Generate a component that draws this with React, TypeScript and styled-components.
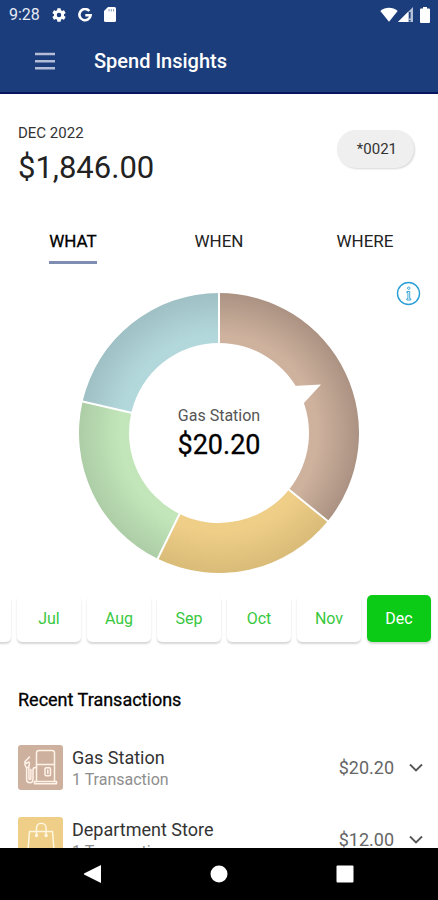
import React, { useState } from "react";
import styled, { createGlobalStyle } from "styled-components";

const GlobalStyle = createGlobalStyle`
  *, *::before, *::after { box-sizing: border-box; }
  body { margin: 0; background: #fff; }
  button { font: inherit; color: inherit; border: 0; padding: 0; background: none; cursor: pointer; }
  svg { display: block; flex: none; }
`;

const Screen = styled.div`
  display: flex;
  flex-direction: column;
  height: 100vh;
  overflow: hidden;
  background: #fff;
  color: #111;
  font-family: Roboto, "Noto Sans", sans-serif;
`;

const Header = styled.header`
  flex: none;
  background: #1c3d7b;
  color: #fff;
  border-bottom: 2px solid #08155f;
`;

const StatusBar = styled.div`
  display: flex;
  align-items: center;
  justify-content: space-between;
  height: 29px;
  padding: 0 8px 0 9px;
`;

const StatusGroup = styled.div<{ $gap: number }>`
  display: flex;
  align-items: center;
  gap: ${(p) => p.$gap}px;
`;

const Clock = styled.time`
  font-size: 16px;
  line-height: 20px;
  color: #e6ebf5;
`;

const TitleBar = styled.div`
  display: flex;
  align-items: center;
  gap: 38px;
  height: 63px;
  padding: 0 34px;
`;

const MenuButton = styled.button`
  color: #b4bdd8;
`;

const Title = styled.h1`
  margin: 0;
  font-size: 20px;
  font-weight: 500;
  line-height: 24px;
`;

const Content = styled.main`
  flex: 1;
  min-height: 0;
  overflow: hidden;
`;

const Summary = styled.section`
  display: flex;
  justify-content: space-between;
  align-items: center;
  padding: 28px 24px 0 18px;
`;

const Period = styled.p`
  margin: 0;
  font-size: 15px;
  line-height: 22px;
  color: #333;
`;

const Total = styled.p`
  margin: 0;
  font-size: 31px;
  line-height: 48px;
  color: #222;
`;

const CardPill = styled.button`
  height: 38px;
  padding: 0 17px 0 20px;
  margin-bottom: 16px;
  border-radius: 19px;
  background: #efefef;
  box-shadow: 1px 1px 2px rgba(0, 0, 0, 0.16);
  font-size: 15px;
  color: #333;
`;

const Tabs = styled.nav`
  display: grid;
  grid-template-columns: repeat(3, 1fr);
  justify-items: center;
  padding-top: 36px;
`;

const Tab = styled.button<{ $active: boolean }>`
  height: 36px;
  border-bottom: 3px solid ${(p) => (p.$active ? "#7f8db3" : "transparent")};
  padding-bottom: 7px;
  font-size: 17px;
  line-height: 26px;
  color: ${(p) => (p.$active ? "#000" : "#222")};
  -webkit-text-stroke: ${(p) => (p.$active ? "0.3px #000" : "0")};
`;

const ChartArea = styled.section`
  display: grid;
  padding: 17px 17px 0;

  > * {
    grid-area: 1 / 1;
  }
`;

const ChartFrame = styled.div`
  justify-self: center;
  margin-top: 12px;
`;

const ChartCaption = styled.div`
  place-self: center;
  padding-top: 12px;
  text-align: center;
`;

const ChartLabel = styled.div`
  font-size: 16px;
  line-height: 24px;
  color: #555;
`;

const ChartValue = styled.div`
  font-size: 27px;
  line-height: 34px;
  color: #000;
  -webkit-text-stroke: 0.3px #000;
`;

const InfoButton = styled.button`
  place-self: start end;
  color: #2b9fd6;
`;

const Months = styled.div`
  display: flex;
  justify-content: flex-end;
  gap: 6px;
  padding: 22px 7px 6px;
  overflow: hidden;
`;

const Month = styled.button<{ $active: boolean }>`
  flex: none;
  width: 64px;
  height: 47px;
  border-radius: 5px;
  background: ${(p) => (p.$active ? "#0bcb16" : "#fff")};
  color: ${(p) => (p.$active ? "#fff" : "#38c840")};
  box-shadow: 0 2px 2px rgba(0, 0, 0, 0.16);
  font-size: 16px;
`;

const SectionTitle = styled.h2`
  margin: 0;
  padding: 40px 18px 33px;
  font-size: 18px;
  font-weight: 400;
  line-height: 24px;
  color: #000;
  -webkit-text-stroke: 0.3px #000;
`;

const Transactions = styled.ul`
  display: flex;
  flex-direction: column;
  gap: 27px;
  margin: 0;
  padding: 0 15px 27px 18px;
  list-style: none;
`;

const Row = styled.li`
  display: flex;
  align-items: center;
  height: 45px;
`;

const CategoryTile = styled.div<{ $color: string }>`
  width: 45px;
  height: 45px;
  border-radius: 3px;
  background: ${(p) => p.$color};
`;

const RowText = styled.div`
  flex: 1;
  padding-left: 9px;
`;

const RowName = styled.div`
  font-size: 18px;
  line-height: 24px;
  color: #333;
`;

const RowCount = styled.div`
  font-size: 16px;
  line-height: 20px;
  color: #8e8e8e;
`;

const RowAmount = styled.div`
  font-size: 18px;
  line-height: 24px;
  color: #666;
`;

const ExpandButton = styled.button`
  padding-left: 15px;
  color: #555;
`;

const SystemNav = styled.nav`
  flex: none;
  display: flex;
  justify-content: center;
  align-items: center;
  gap: 106px;
  height: 52px;
  background: #000;
  color: #fff;
`;

const GearIcon = () => (
  <svg width="14" height="14" viewBox="2 2 20 20" fill="currentColor">
    <path d="M19.14 12.94c.04-.3.06-.61.06-.94s-.02-.64-.07-.94l2.03-1.58a.49.49 0 0 0 .12-.61l-1.92-3.32a.49.49 0 0 0-.59-.22l-2.39.96a7 7 0 0 0-1.62-.94l-.36-2.54A.48.48 0 0 0 13.92 2.4h-3.84a.48.48 0 0 0-.47.41l-.36 2.54a7.3 7.3 0 0 0-1.62.94l-2.39-.96a.48.48 0 0 0-.59.22L2.74 8.87a.47.47 0 0 0 .12.61l2.03 1.58c-.05.3-.09.63-.09.94s.02.64.07.94l-2.03 1.58a.49.49 0 0 0-.12.61l1.92 3.32c.12.22.37.29.59.22l2.39-.96c.5.38 1.03.7 1.62.94l.36 2.54c.05.24.24.41.48.41h3.84c.24 0 .44-.17.47-.41l.36-2.54a7 7 0 0 0 1.62-.94l2.39.96c.22.08.47 0 .59-.22l1.92-3.32a.47.47 0 0 0-.12-.61zM12 15.2a3.2 3.2 0 1 1 0-6.4 3.2 3.2 0 0 1 0 6.4z" />
  </svg>
);

const GoogleIcon = () => (
  <svg width="14" height="14" viewBox="0 0 14 14" fill="none" stroke="currentColor" strokeWidth="2.6">
    <path d="M11.3 3A5.6 5.6 0 1 0 12.6 7.3H7.3" />
  </svg>
);

const SdCardIcon = () => (
  <svg width="12" height="15" viewBox="0 0 12 15">
    <path d="M4 0h6.500A1.500 1.500 0 0 1 12 1.500v12a1.500 1.500 0 0 1-1.500 1.500h-9A1.500 1.500 0 0 1 0 13.500V4z" fill="#fff" />
    <path d="M5 2v2.500M7.300 2v2.500M9.600 2v2.500" stroke="#8b9bbf" strokeWidth="1" />
  </svg>
);

const WifiIcon = () => (
  <svg width="18" height="15" viewBox="0 0 18 15" fill="#fff">
    <path d="M.3 4C5.400-.4 12.600-.4 17.700 4L9 14.800z" />
  </svg>
);

const SignalIcon = () => (
  <svg width="15" height="15" viewBox="0 0 15 15">
    <path d="M15 0v15H0z" fill="#b4bfd8" />
    <path d="M10 5v10H0z" fill="#fff" />
    <path d="M11.800 5v6.500M11.800 13v1.500" stroke="#1c3d7b" strokeWidth="1.500" />
  </svg>
);

const BatteryIcon = () => (
  <svg width="10" height="16" viewBox="0 0 10 16" fill="#fff">
    <path d="M3 0h4v1.500h2a1 1 0 0 1 1 1V15a1 1 0 0 1-1 1H1a1 1 0 0 1-1-1V2.500a1 1 0 0 1 1-1h2z" />
  </svg>
);

const MenuIcon = () => (
  <svg width="22" height="18" viewBox="0 0 22 18" stroke="currentColor" strokeWidth="2.400">
    <path d="M1 2h20M1 9.200h20M1 16.200h20" />
  </svg>
);

const InfoIcon = () => (
  <svg width="25" height="25" viewBox="0 0 25 25" fill="none" stroke="currentColor">
    <circle cx="12.500" cy="12.500" r="11" strokeWidth="1.400" />
    <circle cx="12.700" cy="7.200" r="1.200" strokeWidth="0.900" />
    <path d="M10.800 10.500h2.900v7.300h1.100v1.200h-4v-1.200h1.100v-6.100h-1.100z" strokeWidth="0.900" />
  </svg>
);

const ChevronIcon = () => (
  <svg width="14" height="10" viewBox="0 0 14 10" fill="none" stroke="currentColor" strokeWidth="1.800">
    <path d="M1 1.500l6 6 6-6" />
  </svg>
);

const GasIcon = () => (
  <svg width="45" height="45" viewBox="0 0 45 45" fill="none" stroke="#fff3ea" strokeWidth="1.500" strokeLinejoin="round" strokeLinecap="round">
    <path d="M18.500 36.500V8a2.500 2.500 0 0 1 2.500-2.500h13A2.500 2.500 0 0 1 36.500 8v28.500" />
    <path d="M18.500 19.500h18M16.500 36.500h22v2.200h-22z" />
    <rect x="27" y="22.800" width="5.500" height="8" rx="1.200" />
    <path d="M29.800 25v3.500" />
    <path d="M18.500 22.500h-1a2.500 2.500 0 0 0-2.500 2.500v9.500a3.200 3.200 0 0 1-6.400 0V23L7 20v-3.500l4.500-4.500M7.500 18.500l3.500-1.500M8.600 22.500h2.200l.7-4.500M10.900 23v10.500a1 1 0 0 0 2 0V24.500" />
  </svg>
);

const BagIcon = () => (
  <svg width="45" height="45" viewBox="0 0 45 45" fill="none" stroke="#fff6df" strokeWidth="1.500" strokeLinejoin="round" strokeLinecap="round">
    <path d="M11.500 14.500h23l2 24.500h-27z" />
    <path d="M18.500 18v-7a4.800 4.800 0 0 1 9.600 0v7" />
    <circle cx="18.500" cy="18.500" r="1" />
    <circle cx="28.100" cy="18.500" r="1" />
  </svg>
);

const BackIcon = () => (
  <svg width="20" height="20" viewBox="0 0 20 20" fill="currentColor">
    <path d="M18 1v18L1 10.500v-1z" />
  </svg>
);

const HomeIcon = () => (
  <svg width="20" height="20" viewBox="0 0 20 20" fill="currentColor">
    <circle cx="10" cy="10" r="8.500" />
  </svg>
);

const RecentsIcon = () => (
  <svg width="20" height="20" viewBox="0 0 20 20" fill="currentColor">
    <rect x="1.500" y="1.500" width="17" height="17" rx="1" />
  </svg>
);

const OUTER = 140;
const INNER = 90;

const slices = [
  { id: "gas", from: 0, to: 129, inner: "#ceb29e", outer: "#ab9282" },
  { id: "store", from: 129, to: 206, inner: "#efce88", outer: "#d9bc78" },
  { id: "green", from: 206, to: 283, inner: "#c2e6ba", outer: "#adcda6" },
  { id: "blue", from: 283, to: 360, inner: "#b3d8dc", outer: "#9fc0c4" },
];

const polar = (radius: number, degrees: number) => {
  const a = (degrees * Math.PI) / 180;
  return `${radius * Math.sin(a)} ${-radius * Math.cos(a)}`;
};

const ringPath = (from: number, to: number) =>
  `M${polar(OUTER, from)}A${OUTER} ${OUTER} 0 0 1 ${polar(OUTER, to)}` +
  `L${polar(INNER, to)}A${INNER} ${INNER} 0 0 0 ${polar(INNER, from)}Z`;

const Donut = () => (
  <svg width="280" height="280" viewBox="-140 -140 280 280" role="img">
    <defs>
      {slices.map((s) => (
        <radialGradient key={s.id} id={s.id} gradientUnits="userSpaceOnUse" cx="0" cy="0" r={OUTER}>
          <stop offset="0.7" stopColor={s.inner} />
          <stop offset="1" stopColor={s.outer} />
        </radialGradient>
      ))}
    </defs>
    {slices.map((s) => (
      <path key={s.id} d={ringPath(s.from, s.to)} fill={`url(#${s.id})`} />
    ))}
    {slices.map((s) => (
      <path key={s.id} d={`M${polar(INNER - 1, s.from)}L${polar(OUTER + 1, s.from)}`} stroke="#fff" strokeWidth="2" />
    ))}
    <path d="M74-47L102-48.500L84-29z" fill="#fff" />
  </svg>
);

const tabs = ["WHAT", "WHEN", "WHERE"];
const months = ["Jun", "Jul", "Aug", "Sep", "Oct", "Nov", "Dec"];
const transactions = [
  { name: "Gas Station", count: "1 Transaction", amount: "$20.20", color: "#cdb09d", icon: <GasIcon /> },
  { name: "Department Store", count: "1 Transaction", amount: "$12.00", color: "#efce87", icon: <BagIcon /> },
];

export default function App() {
  const [tab, setTab] = useState("WHAT");
  const [month, setMonth] = useState("Dec");

  return (
    <Screen>
      <GlobalStyle />
      <Header>
        <StatusBar>
          <StatusGroup $gap={12}>
            <Clock>9:28</Clock>
            <GearIcon />
            <GoogleIcon />
            <SdCardIcon />
          </StatusGroup>
          <StatusGroup $gap={7}>
            <StatusGroup $gap={0}>
              <WifiIcon />
              <SignalIcon />
            </StatusGroup>
            <BatteryIcon />
          </StatusGroup>
        </StatusBar>
        <TitleBar>
          <MenuButton aria-label="Menu">
            <MenuIcon />
          </MenuButton>
          <Title>Spend Insights</Title>
        </TitleBar>
      </Header>

      <Content>
        <Summary>
          <div>
            <Period>DEC 2022</Period>
            <Total>$1,846.00</Total>
          </div>
          <CardPill>*0021</CardPill>
        </Summary>

        <Tabs>
          {tabs.map((t) => (
            <Tab key={t} $active={t === tab} onClick={() => setTab(t)}>
              {t}
            </Tab>
          ))}
        </Tabs>

        <ChartArea>
          <ChartFrame>
            <Donut />
          </ChartFrame>
          <ChartCaption>
            <ChartLabel>Gas Station</ChartLabel>
            <ChartValue>$20.20</ChartValue>
          </ChartCaption>
          <InfoButton aria-label="Info">
            <InfoIcon />
          </InfoButton>
        </ChartArea>

        <Months>
          {months.map((m) => (
            <Month key={m} $active={m === month} onClick={() => setMonth(m)}>
              {m}
            </Month>
          ))}
        </Months>

        <SectionTitle>Recent Transactions</SectionTitle>
        <Transactions>
          {transactions.map((t) => (
            <Row key={t.name}>
              <CategoryTile $color={t.color}>{t.icon}</CategoryTile>
              <RowText>
                <RowName>{t.name}</RowName>
                <RowCount>{t.count}</RowCount>
              </RowText>
              <RowAmount>{t.amount}</RowAmount>
              <ExpandButton aria-label={`Expand ${t.name}`}>
                <ChevronIcon />
              </ExpandButton>
            </Row>
          ))}
        </Transactions>
      </Content>

      <SystemNav>
        <button aria-label="Back">
          <BackIcon />
        </button>
        <button aria-label="Home">
          <HomeIcon />
        </button>
        <button aria-label="Recents">
          <RecentsIcon />
        </button>
      </SystemNav>
    </Screen>
  );
}
